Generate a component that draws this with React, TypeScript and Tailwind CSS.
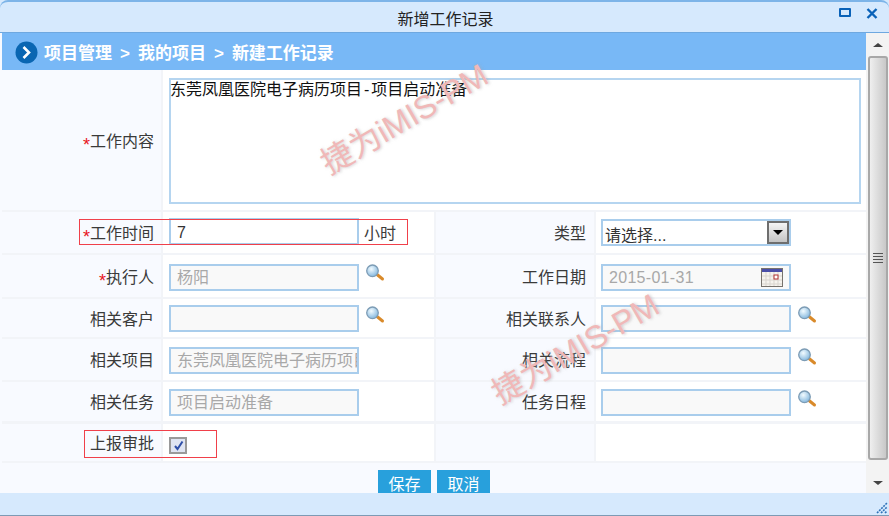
import React from 'react';

const FONT = "font-['Liberation_Sans','Noto_Sans_CJK_SC',sans-serif]";

const Search = ({ className = 'mb-[7px]' }: { className?: string }) => (
  <svg width="20" height="18" viewBox="0 0 20 18" className={`ml-[6px] shrink-0 ${className}`}>
    <defs>
      <radialGradient id="lens" cx="40%" cy="35%" r="70%">
        <stop offset="0%" stopColor="#f2fbff" />
        <stop offset="100%" stopColor="#7fb4dc" />
      </radialGradient>
    </defs>
    <path d="M12 10.5 L17.5 15" stroke="#d98a2a" strokeWidth="3" strokeLinecap="round" />
    <circle cx="7.5" cy="6.8" r="5.8" fill="url(#lens)" stroke="#7d9cb5" strokeWidth="1.3" />
  </svg>
);

const Calendar = () => (
  <svg width="22" height="19" viewBox="0 0 22 19" className="shrink-0">
    <rect x="0.5" y="0.5" width="21" height="18" fill="#f6f3ee" stroke="#77736e" />
    <rect x="1" y="1" width="20" height="3" fill="#4a4fa8" />
    <path d="M1 8h20M1 12h20M1 16h20M5 4v14M9 4v14M13 4v14M17 4v14" stroke="#d9d5cf" strokeWidth="1" />
    <rect x="13" y="7" width="4" height="4" fill="#fff" stroke="#b03030" />
  </svg>
);

const Field = ({ value, disabled = true }: { value?: string; disabled?: boolean }) => (
  <div
    className={`w-[190px] h-[27px] border-2 border-[#a9cdec] pl-[6px] text-[16px] whitespace-nowrap overflow-hidden shrink-0 ${
      disabled ? 'leading-[23px] bg-[#f9f9f9] text-[#a8a8a8]' : 'leading-[25px] bg-white text-[#333]'
    }`}
  >
    {value}
  </div>
);

const Label = ({ text, required, right }: { text: string; required?: boolean; right?: boolean }) => (
  <div
    className={`shrink-0 bg-[#f8faff] border-r-2 border-[#f2f4f8] flex items-center justify-end pt-[3px] text-[16px] text-[#3a3a3a] ${
      right ? 'w-[160px] pr-[8px]' : 'w-[161px] pr-[7px]'
    }`}
  >
    {required && <span className="text-[#e8141c] text-[18px] leading-none mt-[6px]">*</span>}
    {text}
  </div>
);

const Cell = ({ children, right, className = '' }: { children?: React.ReactNode; right?: boolean; className?: string }) => (
  <div
    className={`shrink-0 bg-white flex items-center ${
      right ? 'w-[270px] pl-[5px]' : 'w-[273px] pl-[6px] border-r-2 border-[#f2f4f8]'
    } ${className}`}
  >
    {children}
  </div>
);

const Row = ({ h, children, thick }: { h: string; children: React.ReactNode; thick?: boolean }) => (
  <div className={`flex ${h} ${thick ? 'border-b-[3px]' : 'border-b-2'} border-[#f2f4f8]`}>{children}</div>
);

const Hilite = ({ className }: { className: string }) => (
  <div className={`absolute border-[1.5px] border-[#f0404a] pointer-events-none ${className}`} />
);

const Watermark = ({ className }: { className: string }) => (
  <div
    className={`absolute rotate-[-30deg] text-[32px] leading-none whitespace-nowrap text-[#f0b8b8] [text-shadow:1px_1px_3px_rgba(170,170,170,0.55)] pointer-events-none ${className}`}
  >
    捷为iMIS-PM
  </div>
);

const App: React.FC = () => {
  return (
    <div className={`${FONT} relative w-[889px] h-[516px] overflow-hidden bg-[#d6e9fd]`}>
      {/* title bar */}
      <div className="relative h-[33px] rounded-t-[8px] border-t-2 border-[#7db4e8] border-b border-b-[#6ea8e0] flex items-center justify-center pl-[2px] pt-[5px] text-[16px] text-[#222]">
        新增工作记录
        <div className="absolute left-[839px] top-[6px] w-[12px] h-[9px] border-[2.5px] border-[#0a62b8] rounded-[1px]" />
        <svg width="12" height="11" viewBox="0 0 12 11" className="absolute left-[866px] top-[6px]">
          <path d="M1.5 1 L10.5 10 M10.5 1 L1.5 10" stroke="#0a62b8" strokeWidth="2.4" />
        </svg>
      </div>

      <div className="flex h-[460px]">
        {/* form */}
        <div className="w-[866px] shrink-0 pl-[2px] bg-[#f8faff]">
          <div className="h-[37px] bg-[#78b8f6] flex items-center pl-[13px] text-white font-bold text-[17px]">
            <svg width="23" height="23" viewBox="0 0 23 23" className="mt-[2px] mr-[6px]">
              <circle cx="11.5" cy="11.5" r="11" fill="#0a66b2" />
              <path d="M8.5 6 L14 11.5 L8.5 17" fill="none" stroke="#fff" strokeWidth="2.6" />
            </svg>
            <div className="flex items-center pt-[4px]">
              <span>项目管理</span>
              <span className="mx-[8px]">&gt;</span>
              <span>我的项目</span>
              <span className="mx-[8px]">&gt;</span>
              <span>新建工作记录</span>
            </div>
          </div>

          <Row h="h-[142px]">
            <Label text="工作内容" required />
            <div className="flex-1 bg-white pl-[6px] pt-[8px] pr-[5px]">
              <div className="h-[126px] border-2 border-[#b5d5f0] text-[16px] leading-[20px] text-[#111] indent-[-1px]">
                东莞凤凰医院电子病历项目<span className="px-[2px]">-</span>项目启动准备
              </div>
            </div>
          </Row>

          <Row h="h-[43px]">
            <Label text="工作时间" required />
            <Cell className="pb-[2px]">
              <Field value="7" disabled={false} />
              <span className="ml-[5px] mt-[5px] text-[16px] text-[#3a3a3a]">小时</span>
            </Cell>
            <Label text="类型" right />
            <Cell right>
              <div className="w-[190px] h-[27px] border-2 border-[#a9cdec] bg-white flex justify-between text-[16px] leading-[29px] text-[#333] pl-[2px]">
                请选择...
                <div className="w-[22px] h-[23px] border-2 border-[#6e6e6e] bg-gradient-to-b from-[#f4f4f4] to-[#c4c4c4] flex items-center justify-center">
                  <div className="w-0 h-0 border-x-[5px] border-x-transparent border-t-[5px] border-t-black" />
                </div>
              </div>
            </Cell>
          </Row>

          <Row h="h-[44px]">
            <Label text="执行人" required />
            <Cell className="pt-[3px]">
              <Field value="杨阳" />
              <Search className="mb-[9px]" />
            </Cell>
            <Label text="工作日期" right />
            <Cell right className="pt-[3px]">
              <div className="w-[190px] h-[27px] border-2 border-[#a9cdec] bg-[#f9f9f9] flex items-center justify-between pl-[6px] pr-[6px] text-[16px] tracking-[0.3px] text-[#a8a8a8]">
                2015-01-31
                <Calendar />
              </div>
            </Cell>
          </Row>

          <Row h="h-[40px]">
            <Label text="相关客户" />
            <Cell className="pt-[1px]">
              <Field />
              <Search />
            </Cell>
            <Label text="相关联系人" right />
            <Cell right className="pt-[1px]">
              <Field />
              <Search />
            </Cell>
          </Row>

          <Row h="h-[43px]">
            <Label text="相关项目" />
            <Cell className="pt-[2px]">
              <Field value="东莞凤凰医院电子病历项目" />
            </Cell>
            <Label text="相关流程" right />
            <Cell right className="pt-[2px]">
              <Field />
              <Search />
            </Cell>
          </Row>

          <Row h="h-[42px]" thick>
            <Label text="相关任务" />
            <Cell className="pt-[2px]">
              <Field value="项目启动准备" />
            </Cell>
            <Label text="任务日程" right />
            <Cell right className="pt-[2px]">
              <Field />
              <Search />
            </Cell>
          </Row>

          <Row h="h-[39px]">
            <Label text="上报审批" />
            <Cell>
              <div className="w-[18px] h-[17px] mt-[5px] border-2 border-[#9a9a9a] bg-[#dfe4f2] flex items-center justify-center">
                <svg width="11" height="11" viewBox="0 0 11 11">
                  <path d="M2 6 L4.5 9 L9.5 1.5" fill="none" stroke="#2f4fa8" strokeWidth="2" />
                </svg>
              </div>
            </Cell>
            <Label text="" right />
            <Cell right />
          </Row>

          <div className="flex justify-center gap-[6px] pt-[7px]">
            <div className="w-[53px] h-[28px] bg-[#28a0dc] text-white text-[16px] text-center leading-[30px]">保存</div>
            <div className="w-[53px] h-[28px] bg-[#28a0dc] text-white text-[16px] text-center leading-[30px]">取消</div>
          </div>
        </div>

        {/* scrollbar */}
        <div className="w-[23px] shrink-0 bg-[#f3f3f3] flex flex-col items-center">
          <div className="h-[23px] flex items-center justify-center">
            <div className="w-0 h-0 border-x-[5px] border-x-transparent border-b-[4px] border-b-[#444]" />
          </div>
          <div className="w-[20px] h-[404px] ml-[1px] rounded-[3px] border-2 border-[#a8a8a8] bg-gradient-to-r from-[#efefef] to-[#c8c8c8] flex flex-col items-center justify-center gap-[2px]">
            <div className="w-[10px] h-px bg-[#555]" />
            <div className="w-[10px] h-px bg-[#555]" />
            <div className="w-[10px] h-px bg-[#555]" />
            <div className="w-[10px] h-px bg-[#555]" />
          </div>
          <div className="flex-1 flex items-center justify-center pt-[12px]">
            <div className="w-0 h-0 border-x-[5px] border-x-transparent border-t-[4px] border-t-[#444]" />
          </div>
        </div>
      </div>

      {/* footer */}
      <div className="h-[23px] bg-[#d6e9fd] border-b border-[#7e9ab4] relative">
        <svg width="12" height="12" viewBox="0 0 12 12" className="absolute right-[1px] bottom-[1px]">
          <path d="M1 11 L11 1 M5 11 L11 5 M9 11 L11 9" stroke="#2f72b8" strokeWidth="1.6" strokeDasharray="2 1" />
        </svg>
      </div>

      <Hilite className="left-[79px] top-[219px] w-[329px] h-[26px]" />
      <Hilite className="left-[84px] top-[430px] w-[133px] h-[28px]" />
      <Watermark className="left-[311px] top-[103px]" />
      <Watermark className="left-[482px] top-[333px]" />
    </div>
  );
};

export default App;
